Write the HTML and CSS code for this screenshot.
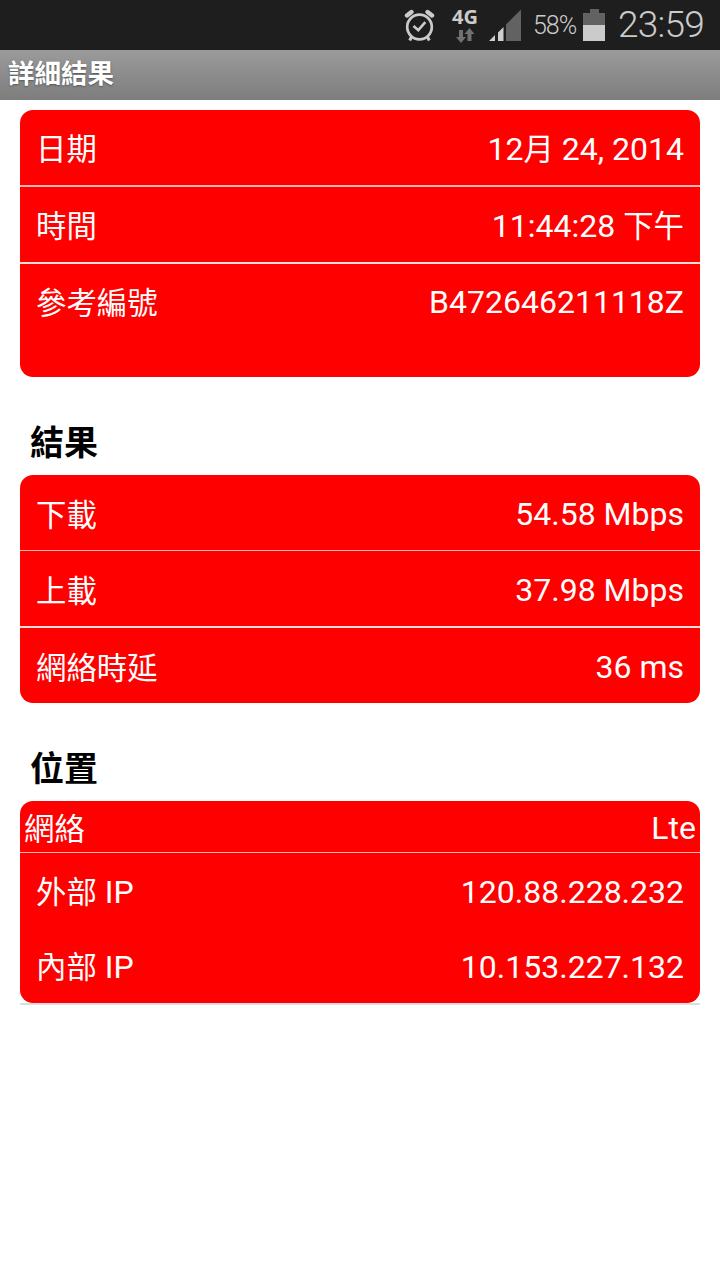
FILE: index.html
```html
<!DOCTYPE html>
<html lang="zh-Hant">
<head>
<meta charset="utf-8">
<title>詳細結果</title>
<link rel="stylesheet" href="styles.css">
</head>
<body>
<header class="status">
  <svg class="alarm" width="32" height="34" viewBox="0 0 32 34" fill="none" stroke="#cbcbcb">
    <circle cx="15.500" cy="19" r="12.300" stroke-width="2.700"/>
    <path d="M9.500 18l4.800 4.200 7-8" stroke-width="2.600"/>
    <path d="M3 7.500L7.500 4M23.500 4L28 7.500" stroke-width="4.400" stroke-linecap="round"/>
    <path d="M7.500 29l-1.800 3.500M23.500 29l1.800 3.500" stroke-width="3"/>
  </svg>
  <div class="network">
    <span class="network-type">4G</span>
    <svg width="20" height="15" viewBox="0 0 20 15" fill="#717171">
      <path d="M4 2h4v7h3L6 15 1 9h3zM12.500 13h4V6h3l-5-6-5 6h3z"/>
    </svg>
  </div>
  <svg class="signal" width="33" height="33" viewBox="0 0 33 33">
    <path fill="#626262" d="M17 15.500L32 .5V32H17z"/>
    <path fill="#cfcfcf" d="M0 32l6-6v6zM9 23.500l5.500-5.500v14H9z"/>
  </svg>
  <span class="percent">58%</span>
  <svg class="battery" width="22" height="32" viewBox="0 0 22 32">
    <path fill="#626262" d="M0 4h7V0h9v4h6v12H0z"/>
    <path fill="#cbcbcb" d="M0 16h22v16H0z"/>
  </svg>
  <time class="clock">23:59</time>
</header>
<h1 class="title">詳細結果</h1>
<main class="content">
  <section class="card card-info">
    <div class="row"><span class="label cjk">日期</span><span>12<span class="cjk">月</span> 24, 2014</span></div>
    <div class="row line-thick"><span class="label cjk">時間</span><span>11:44:28 <span class="cjk">下午</span></span></div>
    <div class="row line-thick pale"><span class="label cjk">參考編號</span><span>B472646211118Z</span></div>
  </section>
  <h2 class="heading">結果</h2>
  <section class="card">
    <div class="row"><span class="label cjk">下載</span><span>54.58 Mbps</span></div>
    <div class="row line-thin"><span class="label cjk">上載</span><span>37.98 Mbps</span></div>
    <div class="row line-thick pale"><span class="label cjk">網絡時延</span><span>36 ms</span></div>
  </section>
  <h2 class="heading">位置</h2>
  <div class="location">
    <section class="card">
      <div class="row compact"><span class="label cjk">網絡</span><span>Lte</span></div>
      <div class="row line-thin"><span class="label"><span class="cjk">外部</span> IP</span><span>120.88.228.232</span></div>
      <div class="row"><span class="label"><span class="cjk">內部</span> IP</span><span>10.153.227.132</span></div>
    </section>
  </div>
</main>
</body>
</html>
```
FILE: styles.css
```css
* { box-sizing: border-box; }
body {
  margin: 0;
  min-height: 1280px;
  background: #fff;
  font-family: Roboto, "Noto Sans CJK TC", sans-serif;
}
.status {
  display: flex;
  align-items: flex-start;
  height: 50px;
  padding-left: 404px;
  background: #1e1e1e;
  color: #cbcbcb;
  white-space: nowrap;
}
.status svg { display: block; flex: none; }
.alarm { margin-top: 8px; }
.network {
  display: flex;
  flex-direction: column;
  align-items: center;
  width: 30px;
  margin: 8px 0 0 14px;
}
.network-type {
  font: 700 20px/18px "Open Sans", sans-serif;
  margin-bottom: 2px;
}
.signal { margin: 9px 0 0 9px; }
.percent {
  width: 50px;
  margin-top: 11px;
  padding-left: 11px;
  font-size: 25px;
  font-weight: 300;
  line-height: 30px;
  letter-spacing: -1px;
}
.battery { margin: 9px 0 0 11px; }
.clock {
  margin: 4px 0 0 13px;
  font-size: 37px;
  font-weight: 300;
  line-height: 42px;
  letter-spacing: -0.8px;
}
.title {
  height: 50px;
  margin: 0;
  padding-left: 8px;
  background: linear-gradient(#9b9b9b, #7d7d7d);
  color: #fff;
  font-size: 26.500px;
  font-weight: 700;
  line-height: 48px;
  text-shadow: 0 1px 2px #555;
}
.content { padding: 10px 20px 0; }
.card {
  overflow: hidden;
  border-radius: 13px;
  background: #f00;
  color: #fff;
  font-size: 32px;
}
.card-info { height: 267px; }
.row {
  display: flex;
  align-items: center;
  justify-content: space-between;
  height: 75px;
  padding: 2px 16px 0;
  line-height: 40px;
  white-space: nowrap;
}
.card-info .row { padding-top: 0; }
.label { margin-bottom: 2px; }
.cjk {
  font-family: "Noto Sans CJK TC", sans-serif;
  font-size: 30.400px;
  line-height: 40px;
}
.line-thick { height: 77px; border-top: 2px solid #ffb8b8; }
.line-thin { height: 76px; border-top: 1px solid #ffb8b8; }
.pale { border-top-color: #ffdada; }
.row.compact { height: 51px; padding: 2px 4px 0; }
.heading {
  height: 98px;
  margin: 0;
  padding: 41px 0 0 10px;
  color: #000;
  font-size: 34px;
  font-weight: 700;
  line-height: 51px;
}
.location { border-bottom: 2px solid #d5e0e3; }
```
